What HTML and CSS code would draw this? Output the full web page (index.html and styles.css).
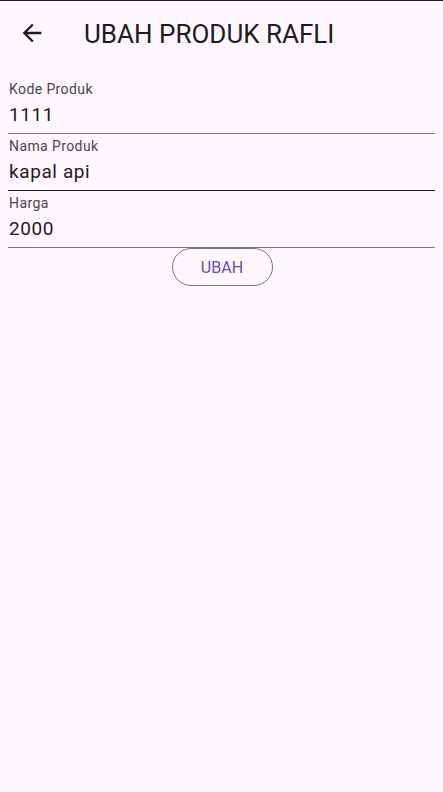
FILE: index.html
```html
<!DOCTYPE html>
<html lang="id">
<head>
<meta charset="utf-8">
<title>Ubah Produk</title>
<link rel="stylesheet" href="styles.css">
</head>
<body>
<header class="appbar">
  <button class="back" aria-label="Kembali">
    <svg viewBox="0 0 24 24" width="28" height="28"><path d="M20 11H7.83l5.59-5.59L12 4l-8 8 8 8 1.41-1.41L7.83 13H20v-2z" fill="#1d1b20"/></svg>
  </button>
  <h1 class="title">UBAH PRODUK RAFLI</h1>
</header>
<main class="form">
  <div class="field">
    <label class="label">Kode Produk</label>
    <div class="value">1111</div>
  </div>
  <div class="field field-active">
    <label class="label">Nama Produk</label>
    <div class="value">kapal api</div>
  </div>
  <div class="field">
    <label class="label">Harga</label>
    <div class="value">2000</div>
  </div>
  <div class="actions">
    <button class="btn-outline">UBAH</button>
  </div>
</main>
</body>
</html>
```
FILE: styles.css
```css
html, body {
  margin: 0;
  padding: 0;
  background: #fef7ff;
}
body {
  border-top: 1px solid #1d1b20;
  font-family: Roboto, "Liberation Sans", sans-serif;
  color: #1d1b20;
  min-height: 791px;
}
.appbar {
  display: flex;
  align-items: center;
  height: 64px;
  padding: 0 0 0 18px;
}
.back {
  border: 0;
  background: none;
  padding: 0;
  width: 28px;
  height: 28px;
  display: flex;
}
.title {
  margin: 2px 0 0 38px;
  font-size: 26px;
  font-weight: 400;
  line-height: 32px;
}
.form {
  padding: 12px 8px 0 8px;
}
.field {
  height: 56px;
  border-bottom: 1px solid #79747e;
  padding-left: 1px;
}
.field-active {
  border-bottom-color: #1d1b20;
}
.label {
  display: block;
  padding-top: 4px;
  font-size: 14px;
  line-height: 16px;
  color: #49454f;
  letter-spacing: 0.4px;
}
.value {
  margin-top: 4px;
  font-size: 19px;
  line-height: 28px;
  letter-spacing: 0.6px;
  color: #1d1b20;
}
.actions {
  display: flex;
  justify-content: center;
}
.btn-outline {
  width: 101px;
  height: 38px;
  border: 1px solid #79747e;
  border-radius: 19px;
  background: transparent;
  color: #6750a4;
  font-family: Roboto, "Liberation Sans", sans-serif;
  font-size: 16px;
  letter-spacing: 0.1px;
  padding: 0;
  margin-left: 1px;
}
```
